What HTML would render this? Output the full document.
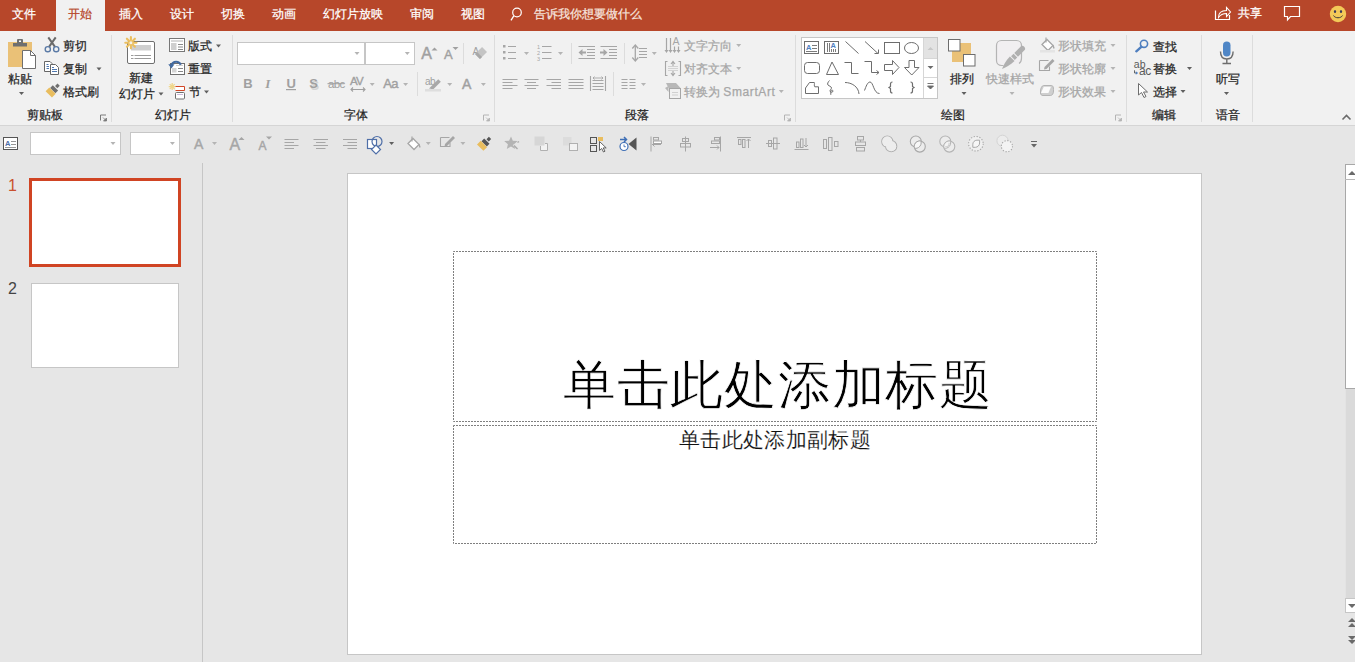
<!DOCTYPE html>
<html><head><meta charset="utf-8">
<style>
*{box-sizing:border-box}
html,body{margin:0;padding:0}
body{width:1355px;height:662px;overflow:hidden;position:relative;background:#e6e6e6;font-family:"Liberation Sans",sans-serif;color:#262626}
.a{position:absolute}
.t{position:absolute;font-size:12px;line-height:12px;white-space:nowrap;margin-left:1px;-webkit-text-stroke:0.25px currentColor}
.w{color:#fff}
.d{color:#a6a6a6}
.sep{position:absolute;width:1px;background:#dcdcdc}
</style></head><body>
<!-- title bar -->
<div class="a" style="left:0;top:0;width:1355px;height:31px;background:#b7472a"></div>
<div class="a" style="left:56px;top:0;width:49px;height:31px;background:#f1f1f1"></div>
<div class="t w" style="left:11px;top:8px">文件</div>
<div class="t" style="left:67px;top:8px;color:#b7472a">开始</div>
<div class="t w" style="left:118px;top:8px">插入</div>
<div class="t w" style="left:169px;top:8px">设计</div>
<div class="t w" style="left:220px;top:8px">切换</div>
<div class="t w" style="left:271px;top:8px">动画</div>
<div class="t w" style="left:322px;top:8px">幻灯片放映</div>
<div class="t w" style="left:409px;top:8px">审阅</div>
<div class="t w" style="left:460px;top:8px">视图</div>
<div class="t" style="left:533px;top:8px;color:#f6e3dd">告诉我你想要做什么</div>
<div class="t w" style="left:1237px;top:7px">共享</div>

<!-- ribbon -->
<div class="a" style="left:0;top:31px;width:1355px;height:94px;background:#f1f1f1"></div>
<div class="a" style="left:0;top:125px;width:1355px;height:1px;background:#d5d5d5"></div>
<div class="sep" style="left:111px;top:35px;height:87px"></div>
<div class="sep" style="left:232px;top:35px;height:87px"></div>
<div class="sep" style="left:494px;top:35px;height:87px"></div>
<div class="sep" style="left:795px;top:35px;height:87px"></div>
<div class="sep" style="left:1126px;top:35px;height:87px"></div>
<div class="sep" style="left:1201px;top:35px;height:87px"></div>
<div class="sep" style="left:1252px;top:35px;height:87px"></div>

<div class="t" style="left:7px;top:73px">粘贴</div>
<div class="t" style="left:62px;top:40px">剪切</div>
<div class="t" style="left:62px;top:63px">复制</div>
<div class="t" style="left:62px;top:86px">格式刷</div>
<div class="t" style="left:26px;top:109px">剪贴板</div>
<div class="t" style="left:128px;top:72px">新建</div>
<div class="t" style="left:118px;top:88px">幻灯片</div>
<div class="t" style="left:187px;top:40px">版式</div>
<div class="t" style="left:187px;top:63px">重置</div>
<div class="t" style="left:188px;top:86px">节</div>
<div class="t" style="left:154px;top:109px">幻灯片</div>
<div class="t" style="left:343px;top:109px">字体</div>
<div class="t" style="left:624px;top:109px">段落</div>
<div class="t d" style="left:683px;top:40px">文字方向</div>
<div class="t d" style="left:683px;top:63px">对齐文本</div>
<div class="t d" style="left:683px;top:86px">转换为 <span style="letter-spacing:0.6px">SmartArt</span></div>
<div class="t" style="left:949px;top:73px">排列</div>
<div class="t d" style="left:985px;top:73px">快速样式</div>
<div class="t d" style="left:1057px;top:40px">形状填充</div>
<div class="t d" style="left:1057px;top:63px">形状轮廓</div>
<div class="t d" style="left:1057px;top:86px">形状效果</div>
<div class="t" style="left:940px;top:109px">绘图</div>
<div class="t" style="left:1152px;top:41px">查找</div>
<div class="t" style="left:1152px;top:63px">替换</div>
<div class="t" style="left:1152px;top:86px">选择</div>
<div class="t" style="left:1151px;top:109px">编辑</div>
<div class="t" style="left:1215px;top:73px">听写</div>
<div class="t" style="left:1215px;top:109px">语音</div>

<!-- ribbon combos -->
<div class="a" style="left:237px;top:42px;width:128px;height:23px;background:#fff;border:1px solid #c6c6c6"></div>
<div class="a" style="left:365px;top:42px;width:50px;height:23px;background:#fff;border:1px solid #c6c6c6"></div>

<!-- toolbar combos -->
<div class="a" style="left:30px;top:132px;width:91px;height:23px;background:#fff;border:1px solid #c6c6c6"></div>
<div class="a" style="left:130px;top:132px;width:50px;height:23px;background:#fff;border:1px solid #c6c6c6"></div>

<!-- left pane -->
<div class="a" style="left:202px;top:163px;width:1px;height:499px;background:#c6c6c6"></div>
<div class="a" style="left:8px;top:178px;font-size:16px;line-height:16px;color:#c9502e">1</div>
<div class="a" style="left:8px;top:281px;font-size:16px;line-height:16px;color:#444">2</div>
<div class="a" style="left:29px;top:178px;width:152px;height:89px;background:#fff;border:3px solid #d04423"></div>
<div class="a" style="left:31px;top:283px;width:148px;height:85px;background:#fff;border:1px solid #c6c6c6"></div>

<!-- slide -->
<div class="a" style="left:347px;top:173px;width:855px;height:482px;background:#fff;border:1px solid #c6c6c6"></div>
<div class="a" style="left:563px;top:358px;font-size:53.4px;line-height:54px;white-space:nowrap;color:#000;letter-spacing:0.7px;-webkit-text-stroke:0.8px #fff">单击此处添加标题</div>
<div class="a" style="left:679px;top:430px;font-size:21.4px;line-height:21px;white-space:nowrap;color:#111;letter-spacing:0.35px;-webkit-text-stroke:0.15px #fff">单击此处添加副标题</div>

<!-- scrollbar -->
<div class="a" style="left:1345px;top:164px;width:10px;height:448px;background:#dadada;border-left:1px solid #e3e3e3"></div>
<div class="a" style="left:1345px;top:164px;width:10px;height:225px;background:#fff;border:1px solid #a8a8a8;border-right:none"></div>
<div class="a" style="left:1345px;top:179px;width:10px;height:1px;background:#b8b8b8"></div>
<div class="a" style="left:1345px;top:598px;width:10px;height:15px;background:#fff;border:1px solid #c6c6c6;border-right:none"></div>
<svg class="a" style="left:1340px;top:160px" width="15" height="500" viewBox="1340 160 15 500">
<path d="M1348 175l4-4 4 4z" fill="#6a6a6a"/>
<path d="M1348 604h8l-4 4z" fill="#6a6a6a"/>
<path d="M1348 622l4-4 4 4zM1348 627l4-4 4 4z" fill="#6a6a6a"/>
<path d="M1348 636h8l-4 4zM1348 640h8l-4 4z" fill="#6a6a6a"/>
</svg>
<svg class="a" style="left:0;top:0" width="1355" height="662" viewBox="0 0 1355 662"><path d="M19.0 92h5l-2.5 3z" fill="#5f5f5f"/>
<path d="M96.5 67.5h5l-2.5 3z" fill="#5f5f5f"/>
<path d="M158.5 92.5h5l-2.5 3z" fill="#5f5f5f"/>
<path d="M216.0 44.5h5l-2.5 3z" fill="#5f5f5f"/>
<path d="M204.0 90.5h5l-2.5 3z" fill="#5f5f5f"/>
<path d="M961.5 92h5l-2.5 3z" fill="#5f5f5f"/>
<path d="M1187.0 67h5l-2.5 3z" fill="#5f5f5f"/>
<path d="M1180.5 90h5l-2.5 3z" fill="#5f5f5f"/>
<path d="M1224.0 92h5l-2.5 3z" fill="#5f5f5f"/>
<path d="M389.1 142h5l-2.5 3z" fill="#5f5f5f"/>
<path d="M354.5 52h5l-2.5 3z" fill="#b4b4b4"/>
<path d="M404.8 52h5l-2.5 3z" fill="#b4b4b4"/>
<path d="M369.7 83h5l-2.5 3z" fill="#b4b4b4"/>
<path d="M403.1 83h5l-2.5 3z" fill="#b4b4b4"/>
<path d="M447.2 83h5l-2.5 3z" fill="#b4b4b4"/>
<path d="M480.9 83h5l-2.5 3z" fill="#b4b4b4"/>
<path d="M524.0 52h5l-2.5 3z" fill="#b4b4b4"/>
<path d="M558.0 52h5l-2.5 3z" fill="#b4b4b4"/>
<path d="M651.8 52h5l-2.5 3z" fill="#b4b4b4"/>
<path d="M641.0 83h5l-2.5 3z" fill="#b4b4b4"/>
<path d="M736.2 44h5l-2.5 3z" fill="#b4b4b4"/>
<path d="M736.2 67h5l-2.5 3z" fill="#b4b4b4"/>
<path d="M778.8 90h5l-2.5 3z" fill="#b4b4b4"/>
<path d="M1009.5 92h5l-2.5 3z" fill="#b4b4b4"/>
<path d="M1110.5 44h5l-2.5 3z" fill="#b4b4b4"/>
<path d="M1110.5 67h5l-2.5 3z" fill="#b4b4b4"/>
<path d="M1110.5 90h5l-2.5 3z" fill="#b4b4b4"/>
<path d="M212.0 142h5l-2.5 3z" fill="#b4b4b4"/>
<path d="M425.8 142h5l-2.5 3z" fill="#b4b4b4"/>
<path d="M460.4 142h5l-2.5 3z" fill="#b4b4b4"/>
<path d="M110.5 142h5l-2.5 3z" fill="#b4b4b4"/>
<path d="M169.9 142h5l-2.5 3z" fill="#b4b4b4"/>
<!-- paste -->
<rect x="8" y="42" width="24" height="25" fill="#eac177"/>
<rect x="13" y="43" width="14" height="3.5" fill="#6f6f6f"/>
<rect x="17" y="39" width="6" height="5" rx="1" fill="#6f6f6f"/>
<rect x="19" y="40.5" width="2" height="1.5" fill="#fff"/>
<path d="M22.5 50.5h8l5 5v13h-13z" fill="#fff" stroke="#6f6f6f"/>
<path d="M30.5 50.5v5h5" fill="none" stroke="#6f6f6f"/>
<!-- scissors -->
<path d="M48.3 37.3L55 46.8M55.7 37.3L49 46.8" stroke="#6a6a6a" stroke-width="2" fill="none"/>
<circle cx="47.8" cy="49.2" r="2.6" fill="none" stroke="#5a7aa6" stroke-width="1.4"/>
<circle cx="56.2" cy="49.2" r="2.6" fill="none" stroke="#5a7aa6" stroke-width="1.4"/>
<!-- copy -->
<path d="M44.5 61.5h5.5l2 2v8h-7.5z" fill="#fff" stroke="#666"/>
<path d="M46.5 64.5h2M46.5 66.5h2.5M46.5 68.5h2.5" stroke="#4f78b0"/>
<path d="M50.5 64.5h5l3 3v7h-8z" fill="#fff" stroke="#666"/>
<path d="M52 67.5h2M52 69.5h5M52 71.5h5" stroke="#4f78b0"/>
<!-- format painter -->
<g transform="translate(54.1,89.2) rotate(45)">
<rect x="-3.75" y="-1.9" width="7.5" height="3.8" fill="#6f6f6f"/>
<rect x="-1.6" y="-6.4" width="3.2" height="3.4" fill="#6f6f6f"/>
<rect x="-4.6" y="2.2" width="9" height="5.2" fill="#e9bd5e"/>
</g>
<!-- launcher -->
<path d="M100.5 120.5v-5.5h5.5" fill="none" stroke="#7a7a7a"/>
<path d="M103 117.5l3.5 3.5M103.5 121h3v-3z" fill="#7a7a7a" stroke="#7a7a7a" stroke-width="0.8"/>
<path d="M483.5 120.5v-5.5h5.5" fill="none" stroke="#b4b4b4"/>
<path d="M486 117.5l3.5 3.5M486.5 121h3v-3z" fill="#b4b4b4" stroke="#b4b4b4" stroke-width="0.8"/>
<path d="M784.5 120.5v-5.5h5.5" fill="none" stroke="#b4b4b4"/>
<path d="M787 117.5l3.5 3.5M787.5 121h3v-3z" fill="#b4b4b4" stroke="#b4b4b4" stroke-width="0.8"/>
<path d="M1115.5 120.5v-5.5h5.5" fill="none" stroke="#b4b4b4"/>
<path d="M1118 117.5l3.5 3.5M1118.5 121h3v-3z" fill="#b4b4b4" stroke="#b4b4b4" stroke-width="0.8"/>
<!-- collapse caret -->
<path d="M1342.5 119.5l4-4 4 4" fill="none" stroke="#6a6a6a" stroke-width="1.6"/>
<!-- new slide -->
<rect x="127.5" y="41.5" width="27" height="22" rx="1.5" fill="#fff" stroke="#6f6f6f"/>
<rect x="131" y="45" width="20" height="5.5" fill="#cfcfcf"/>
<path d="M131 55.5h2.5M134.5 55.5h16.5M131 58.5h2.5M134.5 58.5h16.5" stroke="#9a9a9a"/>
<g transform="translate(130.9,42.7)" stroke="#ebbf5f" stroke-width="2.1" stroke-linecap="round">
<path d="M0 -2.8V-5.6M0 2.8V5.6M-2.8 0H-5.6M2.8 0H5.6M-2 -2L-4 -4M2 2L4 4M-2 2L-4 4M2 -2L4 -4"/>
<circle r="2.1" fill="#f4f1e8" stroke="#ebbf5f" stroke-width="1.2"/>
</g>
<!-- layout -->
<rect x="169.5" y="38.5" width="15" height="13" fill="#fff" stroke="#777"/>
<rect x="171" y="40" width="12" height="2" fill="#d8d8d8"/>
<rect x="171" y="43" width="5.5" height="7" fill="#cfcfcf"/>
<path d="M178 44.5h5M178 47h5M178 49.5h5" stroke="#8a8a8a"/>
<!-- reset -->
<rect x="170.5" y="63.5" width="14" height="11" fill="#fff" stroke="#6f6f6f"/>
<rect x="172" y="68" width="4.5" height="4.5" fill="#d4d4d4"/>
<path d="M176 65.5h7" stroke="#cfcfcf"/>
<path d="M178 68.5h5M178 71.5h5" stroke="#888"/>
<path d="M180.8 64.8c-.8-1.8-2.5-3-4.6-3-2.6 0-4.3 1.6-4.8 3.7" fill="none" stroke="#41699f" stroke-width="2.1"/>
<path d="M168.3 64.3h6.2l-3.1 4.2z" fill="#41699f"/>
<!-- section -->
<g transform="translate(172.2,86.6)" stroke="#f0d68a" stroke-width="1.3">
<path d="M0 -3.5V3.5M-3.5 0H3.5M-2.5 -2.5L2.5 2.5M-2.5 2.5L2.5 -2.5"/>
</g>
<path d="M175.5 86.5h9v4h-9" fill="#fff" stroke="#d24726"/>
<rect x="175.5" y="92.5" width="9" height="6.5" rx="1" fill="#fff" stroke="#6f6f6f"/>
<path d="M177 94.5h6" stroke="#c9b8d8"/>
<!-- font group glyph icons -->
<g fill="#a0a0a0" font-family="Liberation Sans" >
<text x="243.3" y="88.3" font-size="13" font-weight="bold">B</text>
<text x="265.2" y="88.3" font-size="13" font-style="italic" font-weight="bold" font-family="Liberation Serif">I</text>
<text x="286.5" y="88.3" font-size="13" font-weight="bold">U</text>
<rect x="286" y="89" width="10" height="1.2"/>
<text x="310.4" y="89.5" font-size="13" font-weight="bold" fill="#d4d4d4">S</text><text x="309.2" y="88.3" font-size="13" font-weight="bold">S</text>
<text x="328" y="88" font-size="11.5" letter-spacing="-0.6">abc</text>
<rect x="327.5" y="83.2" width="17" height="1"/>
<text x="350" y="85.2" font-size="11.5" letter-spacing="-0.8" stroke="#a0a0a0" stroke-width="0.35">AV</text>
<path d="M351 89.5h14M353 87.5l-2 2 2 2M363 87.5l2 2-2 2" stroke="#a0a0a0" fill="none" stroke-width="1.1"/>
<text x="383.2" y="88.3" font-size="13" letter-spacing="-0.5" stroke="#a0a0a0" stroke-width="0.4">Aa</text>
<text x="421.2" y="58.6" font-size="16" stroke="#a0a0a0" stroke-width="0.45">A</text>
<path d="M431.5 50.5l3-3 3 3z"/>
<text x="444" y="58.6" font-size="13" stroke="#a0a0a0" stroke-width="0.4">A</text>
<path d="M452.5 47h6l-3 3z"/>
<text x="462" y="88.6" font-size="14" stroke="#a0a0a0" stroke-width="0.45">A</text>
</g>
<rect x="463" y="43" width="1" height="21" fill="#dcdcdc"/>
<rect x="417" y="72" width="1" height="24" fill="#dcdcdc"/>
<!-- clear formatting -->
<text x="472.5" y="55" font-size="10" fill="#a0a0a0" font-family="Liberation Sans">A</text>
<g transform="translate(481,53) rotate(-45)"><rect x="-5" y="-3.5" width="10" height="7" fill="#c4c4c4"/><rect x="-5" y="-3.5" width="3" height="7" fill="#a8a8a8"/></g>
<!-- highlight -->
<text x="425" y="85" font-size="10" fill="#a0a0a0" font-family="Liberation Sans" letter-spacing="-0.6">ab</text>
<g transform="translate(436,84) rotate(-45)"><rect x="-7" y="-1.8" width="12" height="3.6" fill="#a8a8a8"/><path d="M-7 -1.8l-3 1.8 3 1.8z" fill="#a8a8a8"/></g>
<rect x="425" y="89" width="16" height="2.5" fill="#dedede"/>
<g fill="#a6a6a6">
<rect x="503" y="45" width="2.5" height="2.5"/><rect x="503" y="51" width="2.5" height="2.5"/><rect x="503" y="57" width="2.5" height="2.5"/>
</g>
<path d="M508 46.5h8M508 52.5h8M508 58.5h8M542 46.5h9.5M542 52.5h9.5M542 58.5h9.5" stroke="#a6a6a6" stroke-width="1.2"/>
<g fill="#a6a6a6" font-family="Liberation Sans" font-size="5.5"><text x="537" y="48.5">1</text><text x="537" y="54.5">2</text><text x="537" y="60.5">3</text></g>
<rect x="571" y="43" width="1" height="21" fill="#dcdcdc"/>
<rect x="624" y="43" width="1" height="21" fill="#dcdcdc"/>
<rect x="613" y="72" width="1" height="24" fill="#dcdcdc"/>
<!-- indents -->
<path d="M578.5 46.5h16.5M587 49.5h8M587 52.5h8M587 55.5h8M578.5 58.5h16.5" stroke="#a6a6a6" stroke-width="1.2"/>
<path d="M578.5 52.5l4-3.5v2.5h3.5v2h-3.5v2.5z" fill="#a6a6a6"/>
<path d="M600.5 46.5h16.5M609 49.5h8M609 52.5h8M609 55.5h8M600.5 58.5h16.5" stroke="#a6a6a6" stroke-width="1.2"/>
<path d="M607.5 52.5l-4-3.5v2.5h-3.5v2h3.5v2.5z" fill="#a6a6a6"/>
<!-- line spacing -->
<path d="M635.3 46v14" stroke="#a6a6a6" stroke-width="1.3"/>
<path d="M632.3 48.5l3-3.5 3 3.5M632.3 57.5l3 3.5 3-3.5" fill="none" stroke="#a6a6a6" stroke-width="1.3"/>
<path d="M639 48.5h8M639 51.5h8M639 54.5h8M639 57.5h8" stroke="#a6a6a6" stroke-width="1.2"/>
<!-- aligns -->
<path d="M502.5 79.5h15M502.5 82.5h10M502.5 85.5h15M502.5 88.5h10" stroke="#a6a6a6" stroke-width="1.1"/>
<path d="M524.5 79.5h14M527 82.5h9M524.5 85.5h14M527 88.5h9" stroke="#a6a6a6" stroke-width="1.1"/>
<path d="M546.5 79.5h14.5M551.5 82.5h9.5M546.5 85.5h14.5M551.5 88.5h9.5" stroke="#a6a6a6" stroke-width="1.1"/>
<path d="M568.5 79.5h15M568.5 82.5h15M568.5 85.5h15M568.5 88.5h15" stroke="#a6a6a6" stroke-width="1.1"/>
<path d="M590.5 76v15M605.5 76v15M592.5 80.5h11M592.5 83.5h11M592.5 86.5h11M592.5 89.5h11" stroke="#a6a6a6" stroke-width="1.1"/>
<path d="M593 78h10M594.5 76.5l-1.5 1.5 1.5 1.5M601.5 76.5l1.5 1.5-1.5 1.5" stroke="#a6a6a6" stroke-width="0.9" fill="none"/>
<!-- columns -->
<path d="M621.5 79.5h6M621.5 82.5h6M621.5 85.5h6M621.5 88.5h6M629.5 79.5h6M629.5 82.5h6M629.5 85.5h6M629.5 88.5h6" stroke="#a6a6a6" stroke-width="1.1"/>
<!-- text direction -->
<path d="M666.5 38v12.5M670.5 38v12.5M674.5 46.5v4M678.5 46.5v4" stroke="#a6a6a6" stroke-width="1.2"/>
<path d="M664.5 50h4l-2 3zM668.5 50h4l-2 3zM672.5 50h4l-2 3zM676.5 50h4l-2 3z" fill="#a6a6a6"/>
<text x="672.6" y="44.8" font-size="10.5" fill="#a6a6a6" font-family="Liberation Sans">A</text>
<!-- align text -->
<path d="M667.5 61.5h-2v14h2M678.5 61.5h2v14h-2" fill="none" stroke="#a6a6a6" stroke-width="1.1"/>
<path d="M668 66.5h10M668 68.5h10M668 70.5h10" stroke="#cfcfcf" stroke-width="0.9"/>
<path d="M673 62v4M673 71v4.5M671 64l2-2.5 2 2.5M671 73l2 2.5 2-2.5" stroke="#a6a6a6" fill="none" stroke-width="1.1"/>
<!-- smartart -->
<path d="M666 83h10l4.5 5h-12z" fill="#b8b8b8"/>
<path d="M665 88l3.5-2v6z" fill="#b8b8b8"/>
<rect x="669.5" y="88.5" width="11" height="10" fill="#f1f1f1" stroke="#a6a6a6"/>
<path d="M672 92.5h6M672 95h6" stroke="#c8c8c8" stroke-width="0.8"/>
<!-- shapes gallery -->
<rect x="801.5" y="37.5" width="136" height="61" fill="#fff" stroke="#c6c6c6"/>
<rect x="924" y="38" width="13" height="20" fill="#e3e3e3"/>
<path d="M923.5 38v60M924 58.5h13M924 77.5h13" stroke="#d6d6d6"/>
<path d="M927.5 50l3-3 3 3z" fill="#c8c8c8"/>
<path d="M927.5 66h6l-3 3z" fill="#6a6a6a"/>
<path d="M927.5 83.5h6M927.5 86h6l-3 3z" stroke="#6a6a6a" fill="#6a6a6a" stroke-width="0.9"/>
<g fill="none" stroke="#6d6d6d" stroke-width="1">
<!-- row1 -->
<rect x="804.5" y="41.5" width="14" height="12"/>
<rect x="824.5" y="41.5" width="14" height="12"/>
<path d="M845.5 41.5l13 12"/>
<path d="M865 41.5l13 12M878.5 53.5v-4M878.5 53.5h-4"/>
<rect x="884.5" y="42.5" width="15" height="11"/>
<ellipse cx="911.5" cy="48" rx="7" ry="5.5"/>
<!-- row2 -->
<rect x="804.5" y="62.5" width="15" height="11" rx="3"/>
<path d="M826.5 74.5l5.5-12.5 6.5 12.5z"/>
<path d="M844.5 62.5h7v11h7"/>
<path d="M864.5 61.5h7v11h7.5M876.5 70.5l2.5 2-2.5 2"/>
<path d="M884.5 64.5h8v-4l6.5 7-6.5 7v-4h-8z"/>
<path d="M909 60.5h5.5v7h4.5l-7.25 7.5-7.25-7.5h4.5z"/>
<!-- row3 -->
<path d="M805.5 93.5v-5.5l4-5.5h4.8c.5 1-.5 3.5.5 4.3h3.7v6.7z"/>
<path d="M829.5 80.5c-1.5 1.5-2.5 3.5-1.5 4.5 1 1 3.5 1.5 3.5 3 0 1-1.5 1.5-1.5 3 0 1.5 3 1.8 3 0 0-1.2-2.2-1.2-2.2.3v3.5"/>
<path d="M845 82.5c6.5 0 13.5 4 14 11.5"/>
<path d="M864.5 90.5c1.5-4 3-8.5 5.5-8.5 3.5 0 3.5 11.5 9.5 11.5"/>
<path d="M892.5 82c-1.5 0-2 1-2 2v2.5l-1.5 1 1.5 1v2.5c0 1 .5 2 2 2" stroke-width="1.2"/>
<path d="M910.5 82c1.5 0 2 1 2 2v2.5l1.5 1-1.5 1v2.5c0 1-.5 2-2 2" stroke-width="1.2"/>
</g>
<g font-family="Liberation Sans" font-weight="bold" font-size="7.5" fill="#4f7fbf"><text x="806" y="49.5">A</text><text x="830.5" y="47.5">A</text></g>
<path d="M812 45.5h5M812 48.5h5M806 51.5h11" stroke="#6d6d6d" stroke-width="0.9"/>
<path d="M827.5 43v9M829.5 43v9M831.5 49v3M833.5 49v3M835.5 49v3" stroke="#6d6d6d" stroke-width="0.9"/>
<!-- arrange -->
<rect x="952" y="43" width="19" height="19" fill="#eac177"/>
<rect x="948.5" y="39.5" width="11.5" height="11.5" fill="#fff" stroke="#6d6d6d"/>
<rect x="963.5" y="54.5" width="11.5" height="11.5" fill="#fff" stroke="#6d6d6d"/>
<!-- quick styles -->
<path d="M1019 63.5c1.6-1 2.5-2.6 2.5-5.5v-12.5c0-2.8-2.2-5-5-5h-15c-2.8 0-5 2.2-5 5v15c0 2.8 2.2 5 5 5h2" fill="#f1eff1" stroke="#b4b4b4" stroke-width="1.2"/>
<g transform="translate(1014,57) rotate(-45)">
<path d="M3 -2.6h9.5c1 0 2 1 2 2.6s-1 2.6-2 2.6h-9.5z" fill="#b0b0b0"/>
<rect x="-1.5" y="-2.6" width="3.5" height="5.2" fill="#b0b0b0"/>
<path d="M-2.5 -3.3c-6 0-11 1.8-14.5 3.3 3.5 1.5 8.5 3.3 14.5 3.3z" fill="#b0b0b0"/>
</g>
<!-- shape fill -->
<path d="M1042 44.5l5-5 6 6-5 5z" fill="#fff" stroke="#a6a6a6" stroke-width="1.3"/>
<path d="M1046 37.5v5" stroke="#a6a6a6" stroke-width="1.2"/>
<path d="M1053 44.5c1 1.5 1.5 2.5 1.5 3.5s-1 1-1.5 0z" fill="#a6a6a6"/>
<rect x="1040" y="50" width="15" height="2.5" fill="#e4e4e4"/>
<!-- shape outline -->
<path d="M1039.5 60.5h9M1039.5 60.5v10h10v-4" fill="none" stroke="#a6a6a6" stroke-width="1.1"/>
<path d="M1044.5 67l8-8 2 2-8 8-2.5.5z" fill="#a6a6a6"/>
<!-- shape effects -->
<path d="M1043.5 85.5h8c1.5 0 2 2 2 4v1.5c0 2.5-1.2 4.5-3 4.5h-7.5c-1.6 0-2.5-1-2.5-2.5v-2c0-2.5 1.5-5.5 3-5.5z" fill="#cfcfcf" stroke="#b4b4b4"/>
<path d="M1043.8 86.8h7.2l-2.6 6.2h-7.4z" fill="#fbfbfb"/>
<!-- find -->
<circle cx="1144" cy="43.8" r="3.6" fill="none" stroke="#4f7fbf" stroke-width="1.6"/>
<path d="M1141.3 46.8l-5 4.5" stroke="#4f7fbf" stroke-width="2.4" stroke-linecap="round"/>
<!-- replace -->
<g font-family="Liberation Sans" fill="#5a5a5a"><text x="1133.8" y="67.6" font-size="10.5">ab</text><text x="1139" y="74.8" font-size="12" letter-spacing="-0.4">ac</text></g>
<path d="M1134.5 70.3v2.7h1.5" stroke="#555" fill="none" stroke-width="0.9"/>
<path d="M1135.8 71.2l2.4 1.8-2.4 1.8z" fill="#4f7fbf"/>
<!-- select -->
<path d="M1138.5 83.5v11.5l3-2.5 2.5 5 2-1-2.5-4.5h4z" fill="#fff" stroke="#6d6d6d" stroke-width="1"/>
<!-- mic -->
<rect x="1223" y="41.5" width="7.5" height="15" rx="3.75" fill="#4f86c6"/>
<path d="M1220.5 51.5c0 5 2.5 7.5 6.3 7.5s6.3-2.5 6.3-7.5M1226.8 59v4.5M1222.5 63.5h8.5" fill="none" stroke="#6d6d6d" stroke-width="1.4"/>
<!-- title bar icons -->
<path d="M1215.5 10.5v9h14v-4.5" fill="none" stroke="#fff" stroke-width="1.2"/>
<path d="M1218.5 17.5c0-5 3.5-7 8-7v-3l4 4.5-4 4.5v-3c-3.5 0-6 1-8 4z" fill="none" stroke="#fff" stroke-width="1.1"/>
<path d="M1284.5 6.5h15v10h-9l-3 3.5v-3.5h-3z" fill="none" stroke="#fff" stroke-width="1.2"/>
<circle cx="1338" cy="14" r="8.2" fill="#f3c958"/>
<ellipse cx="1335" cy="11.5" rx="1.1" ry="1.6" fill="#3b3b5b"/><ellipse cx="1341" cy="11.5" rx="1.1" ry="1.6" fill="#3b3b5b"/>
<path d="M1333.5 15.5c1.5 3 7.5 3 9 0" fill="none" stroke="#3b3b3b" stroke-width="1"/>
<circle cx="517" cy="12.5" r="4.3" fill="none" stroke="#fff" stroke-width="1.2"/>
<path d="M513.8 15.8l-2.8 4.5" stroke="#fff" stroke-width="1.3"/>
<!-- text box icon -->
<rect x="3.5" y="137.5" width="14" height="12" fill="#fff" stroke="#555"/>
<text x="5" y="145.5" font-family="Liberation Sans" font-weight="bold" font-size="7.5" fill="#4f6fa8">A</text>
<path d="M11 141.5h5M11 144.5h5M5 147.5h11" stroke="#8a8a8a" stroke-width="0.9"/>
<g fill="#a6a6a6" font-family="Liberation Sans" stroke="#a6a6a6" stroke-width="0.45">
<text x="194" y="149" font-size="14">A</text>
<text x="229.5" y="150" font-size="16">A</text>
<path d="M238.5 140l3-3 3 3z" stroke="none"/>
<text x="258.5" y="150" font-size="12">A</text>
<path d="M266 136.5h6l-3 3z" stroke="none"/>
</g>
<path d="M284.5 139.5h14M284.5 142.5h9.5M284.5 145.5h14M284.5 148.5h9.5" stroke="#a6a6a6" stroke-width="1.1"/>
<path d="M313.5 139.5h14.5M316 142.5h9.5M313.5 145.5h14.5M316 148.5h9.5" stroke="#a6a6a6" stroke-width="1.1"/>
<path d="M343 139.5h14M347.5 142.5h9.5M343 145.5h14M347.5 148.5h9.5" stroke="#a6a6a6" stroke-width="1.1"/>
<!-- shapes icon -->
<rect x="367.5" y="139.5" width="9" height="9" fill="#fff" stroke="#4f6fa8" stroke-width="1.2"/>
<circle cx="377" cy="141.5" r="5" fill="none" stroke="#4f6fa8" stroke-width="1.2"/>
<path d="M376 145l4.5 4.5-4.5 4.5-4.5-4.5z" fill="#fff" stroke="#4f6fa8" stroke-width="1.2"/>
<!-- fill -->
<path d="M408 143.5l5-5 6 6-5 5z" fill="#fff" stroke="#a6a6a6" stroke-width="1.3"/>
<path d="M412 136.5v5" stroke="#a6a6a6" stroke-width="1.2"/>
<path d="M419 143.5c1 1.5 1.5 2.5 1.5 3.5s-1 1-1.5 0z" fill="#a6a6a6"/>
<!-- outline -->
<path d="M440.5 137.5h9M440.5 137.5v9h9.5v-4" fill="none" stroke="#a6a6a6" stroke-width="1.1"/>
<path d="M445 144l8-8 2 2-8 8-2.5.5z" fill="#a6a6a6"/>
<!-- format painter -->
<g transform="translate(485.5,142.5) rotate(45)">
<rect x="-3.75" y="-1.9" width="7.5" height="3.8" fill="#555"/>
<rect x="-1.6" y="-6.4" width="3.2" height="3.4" fill="#555"/>
<rect x="-4.6" y="2.2" width="9" height="5.2" fill="#e9bd5e"/>
</g>
<!-- animation star -->
<path d="M511 136.5l1.8 4.3 4.8.3-3.5 3.2 1.1 4.7-4.2-2.6-4.2 2.6 1.1-4.7-3.7-3.2 4.9-.3z" fill="#b4b4b4"/>
<path d="M513.5 144.5l4.5 4.5" stroke="#e3e3e3" stroke-width="2.2"/>
<path d="M514 145.5l3.5 3.5M517.5 142.5l1.5-1" stroke="#aaa" stroke-width="1.3"/>
<!-- bring forward / send backward -->
<path d="M540.5 146v4.5h7v-7h-2.5" fill="#f3f3f3" stroke="#b0b0b0"/>
<rect x="534.5" y="136.5" width="10" height="9" fill="#d6d6d6"/>
<rect x="563" y="137" width="8.5" height="8.5" fill="#dcdcdc"/>
<rect x="569.5" y="143.5" width="8" height="7" fill="#f3f3f3" stroke="#b0b0b0"/>
<!-- selection pane -->
<rect x="590.5" y="137.5" width="6" height="6" fill="none" stroke="#555"/>
<rect x="590.5" y="145.5" width="6" height="6" fill="none" stroke="#555"/>
<rect x="598" y="137" width="5" height="4" fill="#e9bd5e"/>
<path d="M599.5 141.5v9l2.2-2 1.8 3.5 1.5-.8-1.8-3.3h3z" fill="#fff" stroke="#555" stroke-width="0.9"/>
<!-- animation pane -->
<path d="M620 139.5h6M624 137l2.5 2.5-2.5 2.5" fill="none" stroke="#3f6fb5" stroke-width="1.5"/>
<circle cx="624" cy="146.5" r="4" fill="#fff" stroke="#3f6fb5" stroke-width="1.2"/>
<path d="M624 144.5v2.2h1.8" fill="none" stroke="#3f6fb5" stroke-width="0.9"/>
<path d="M636.5 137.5v13l-8-6.5z" fill="#555"/>
<g fill="none" stroke="#a6a6a6" stroke-width="1">
<!-- align left -->
<path d="M651 136.5v15M652 144.5h9M654.5 142.5l-2 2 2 2"/>
<rect x="653.5" y="137.5" width="5" height="2.5"/><rect x="653.5" y="141" width="8" height="2.5" fill="#fff"/>
<!-- align center -->
<path d="M685.5 136.5v15"/>
<rect x="682.5" y="138.5" width="6" height="3"/><rect x="680.5" y="143.5" width="10" height="3.5"/>
<!-- align right -->
<path d="M720.5 136.5v15M710 147.5h9M717 145.5l2 2-2 2"/>
<rect x="714.5" y="137.5" width="5" height="2.5"/><rect x="711.5" y="141" width="8" height="2.5"/>
<!-- align top -->
<path d="M737 137.5h14"/>
<rect x="738.5" y="139.5" width="2.5" height="5"/><rect x="742.5" y="139.5" width="2.5" height="8"/>
<path d="M748.5 148v-9M746.5 141l2-2 2 2"/>
<!-- align middle -->
<path d="M766 143.5h14"/>
<rect x="768.5" y="140.5" width="3" height="6"/><rect x="773.5" y="138" width="3.5" height="11"/>
<!-- align bottom -->
<path d="M794.5 149.5h14"/>
<rect x="796.5" y="142" width="2.5" height="5.5"/><rect x="800.5" y="139" width="2.5" height="8.5"/>
<path d="M806 138v9M804 145l2 2 2-2"/>
<!-- distribute h -->
<rect x="823.5" y="139.5" width="3" height="9"/><rect x="828.5" y="137.5" width="3.5" height="13"/><rect x="834.5" y="141.5" width="3.5" height="5"/>
<!-- distribute v -->
<rect x="857.5" y="136.5" width="6" height="3.5"/><rect x="855.5" y="142" width="10" height="3.5"/><rect x="856.5" y="147.5" width="8" height="3.5"/>
<path d="M860.5 140v2"/>
</g>
<!-- merge shapes -->
<g stroke="#b0b0b0" stroke-width="1.1">
<circle cx="887.3" cy="141.6" r="5.6" fill="#ededed"/><circle cx="891.2" cy="146.2" r="5.6" fill="#ededed"/>
</g>
<circle cx="887.3" cy="141.6" r="5" fill="#ededed"/><circle cx="891.2" cy="146.2" r="5" fill="#ededed"/>
<g fill="none" stroke="#a8a8a8" stroke-width="1.1">
<circle cx="915.8" cy="141.5" r="5.5" fill="#ececec"/><circle cx="919.8" cy="146.6" r="5.5" fill="#ececec"/>
<path d="M915.8 141.5m4.7 -2.6" />
</g>
<path d="M921 141.3c.6 2.2-.2 4.8-2.5 6.2-2 1.2-3.3.9-4.1.5-.6-2.2.2-4.8 2.5-6.2 2-1.2 3.3-.9 4.1-.5z" fill="#f7f7f7" stroke="#a8a8a8" stroke-width="1"/>
<g fill="none" stroke="#b4b4b4" stroke-width="1.1">
<circle cx="945.3" cy="141.5" r="5.5" fill="#ececec"/><circle cx="949.3" cy="146.6" r="5.5" fill="#ececec"/>
</g>
<path d="M950.5 141.3c.6 2.2-.2 4.8-2.5 6.2-2 1.2-3.3.9-4.1.5-.6-2.2.2-4.8 2.5-6.2 2-1.2 3.3-.9 4.1-.5z" fill="#f3f3f3" stroke="#b4b4b4" stroke-width="1"/>
<path d="M949 142.8c.3 1.3-.1 2.7-1.4 3.5-1.1.7-1.9.5-2.3.3" fill="none" stroke="#c0c0c0" stroke-width="0.9"/>
<circle cx="975.9" cy="143.7" r="7.3" fill="#f0f0f0" stroke="#a8a8a8" stroke-width="1.1" stroke-dasharray="1.3 1.6"/>
<path d="M972.8 147.3v-3c0-2.2 1.8-4.1 4.1-4.1h2.7v2.8c0 2.3-1.9 4.3-4.2 4.3z" fill="#f7f7f7" stroke="#a8a8a8" stroke-width="1"/>
<circle cx="1002.5" cy="140.8" r="5.6" fill="#ececec" stroke="#d4d4d4" stroke-width="1"/>
<circle cx="1006.9" cy="146.2" r="5.6" fill="#f3f3f3" stroke="#a8a8a8" stroke-width="1.1" stroke-dasharray="1.3 1.6"/>
<path d="M1031 141.5h6" stroke="#666" stroke-width="1"/><path d="M1031 144h6l-3 3.5z" fill="#666"/>
<rect x="453.5" y="251.5" width="643" height="170" fill="none" stroke="#7f7f7f" stroke-dasharray="2 1" stroke-dashoffset="0.5"/>
<rect x="453.5" y="425.5" width="643" height="118" fill="none" stroke="#7f7f7f" stroke-dasharray="2 1" stroke-dashoffset="0.5"/>
</svg></body></html>
